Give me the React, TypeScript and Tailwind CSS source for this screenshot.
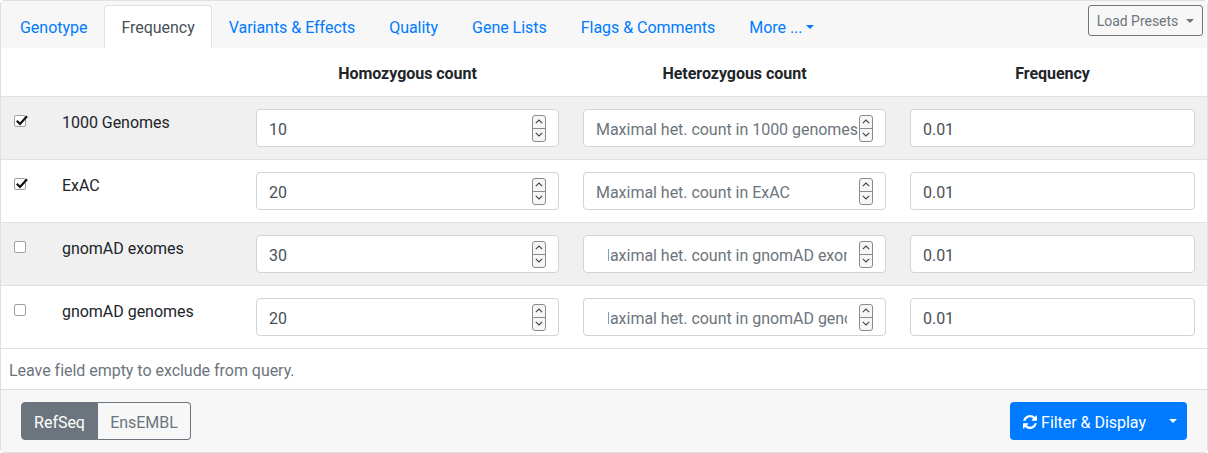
const TABS = ["Genotype", "Frequency", "Variants & Effects", "Quality", "Gene Lists", "Flags & Comments"];

type Row = {
    name: string;
    checked: boolean;
    hom: string;
    placeholder: string;
    clipped?: boolean;
};

const ROWS: Row[] = [
    { name: "1000 Genomes", checked: true, hom: "10", placeholder: "Maximal het. count in 1000 genomes" },
    { name: "ExAC", checked: true, hom: "20", placeholder: "Maximal het. count in ExAC" },
    { name: "gnomAD exomes", checked: false, hom: "30", placeholder: "Maximal het. count in gnomAD exomes", clipped: true },
    { name: "gnomAD genomes", checked: false, hom: "20", placeholder: "Maximal het. count in gnomAD genomes", clipped: true },
];

function Caret() {
    return <span className="inline-block border-x-[4.5px] border-t-[4.5px] border-x-transparent border-t-current" />;
}

function RefreshIcon() {
    return (
        <svg viewBox="0 0 1536 1536" className="mt-[2px] h-[14px] w-[14px] shrink-0" fill="currentColor">
            <path d="M1511 928q0 5-1 7-64 268-268 434.5t-478 166.5q-146 0-282.5-55t-243.5-157l-129 129q-19 19-45 19t-45-19-19-45v-448q0-26 19-45t45-19h448q26 0 45 19t19 45-19 45l-137 137q71 66 161 102t187 36q134 0 250-65t186-179q11-17 53-117 8-23 30-23h192q13 0 22.5 9.500t9.500 22.500zm25-800v448q0 26-19 45t-45 19h-448q-26 0-45-19t-19-45 19-45l138-138q-148-137-349-137-134 0-250 65t-186 179q-11 17-53 117-8 23-30 23h-199q-13 0-22.500-9.500t-9.500-22.500v-7q65-268 270-434.500t480-166.500q146 0 284 55.500t245 156.500l130-129q19-19 45-19t45 19 19 45z" />
        </svg>
    );
}

function CheckMark({ checked }: { checked: boolean }) {
    return (
        <span className="relative mt-[6px] block h-[12px] w-[12px] rounded-[2px] border border-[#a0a0a0] bg-white">
            {checked && (
                <svg viewBox="0 0 14 13" className="absolute -top-[2px] left-0 h-[13px] w-[14px]">
                    <path d="M1.8 6.8 L5 10 L12 2.2" fill="none" stroke="#111" strokeWidth="2.2" />
                </svg>
            )}
        </span>
    );
}

function Spinner() {
    return (
        <span className="mt-[1px] flex w-[14px] shrink-0 flex-col">
            <span className="flex h-[14px] items-center justify-center rounded-t-[3px] border border-[#8a8a8a] bg-[#f6f6f6]">
                <svg viewBox="0 0 8 5" className="h-[5px] w-[8px]">
                    <path d="M0.8 4.2 L4 1 L7.200 4.2" fill="none" stroke="#444" strokeWidth="1.1" />
                </svg>
            </span>
            <span className="-mt-px flex h-[14px] items-center justify-center rounded-b-[3px] border border-[#8a8a8a] bg-[#f6f6f6]">
                <svg viewBox="0 0 8 5" className="h-[5px] w-[8px]">
                    <path d="M0.8 0.8 L4 4 L7.200 0.8" fill="none" stroke="#444" strokeWidth="1.1" />
                </svg>
            </span>
        </span>
    );
}

function NumberField({ value, placeholder, clipped }: { value?: string; placeholder?: string; clipped?: boolean }) {
    return (
        <div className="flex h-[38px] items-center rounded-[4px] border border-[#ced4da] bg-white pl-3 pr-[12px]">
            {value ? (
                <span className="flex-1 pt-[4px] text-[#495057]">{value}</span>
            ) : clipped ? (
                <span className="ml-[12px] mr-[12px] flex-1 overflow-hidden whitespace-nowrap pt-[4px] text-[#6c757d]">
                    <span className="-ml-[12px] inline-block">{placeholder}</span>
                </span>
            ) : (
                <span className="flex-1 overflow-hidden whitespace-nowrap pt-[4px] text-[#6c757d]">{placeholder}</span>
            )}
            <Spinner />
        </div>
    );
}

export default function App() {
    return (
        <div className="h-[453px] w-[1208px] overflow-hidden bg-white font-['Roboto',sans-serif] text-base tracking-[-0.03px] text-[#212529]">
            <div className="flex h-[453px] flex-col rounded-[4px] border border-[#dfdfdf]">
                <div className="flex h-[47px] shrink-0 items-start justify-between bg-[#f7f7f7] pl-[2px] pr-[4px] pt-[4px]">
                    <nav className="flex">
                        {TABS.map((tab) =>
                            tab === "Frequency" ? (
                                <a key={tab} className="h-[43px] rounded-t-[4px] border border-b-0 border-[#dee2e6] bg-white px-4 pb-[6px] pt-[10px] text-[#495057]">
                                    {tab}
                                </a>
                            ) : (
                                <a key={tab} className="h-[43px] border border-transparent px-4 pb-[6px] pt-[10px] text-[#007bff]">
                                    {tab}
                                </a>
                            ),
                        )}
                        <a className="flex h-[43px] items-start gap-[3px] border border-transparent px-4 pb-[6px] pt-[10px] text-[#007bff]">
                            More ...
                            <span className="mt-[9px] flex"><Caret /></span>
                        </a>
                    </nav>
                    <button
                        type="button"
                        className="flex h-[31px] w-[115px] items-center justify-center gap-[8px] rounded-[3px] border border-[#6c757d] text-sm text-[#6c757d]"
                    >
                        Load Presets
                        <Caret />
                    </button>
                </div>

                <table className="w-full table-fixed border-collapse">
                    <colgroup>
                        <col className="w-[49px]" />
                        <col className="w-[194px]" />
                        <col className="w-[327px]" />
                        <col className="w-[327px]" />
                        <col />
                    </colgroup>
                    <thead>
                        <tr className="h-[48px] border-b border-[#dee2e6]">
                            <th />
                            <th />
                            <th className="pt-[4px] text-center font-bold">Homozygous count</th>
                            <th className="pt-[4px] text-center font-bold">Heterozygous count</th>
                            <th className="pt-[4px] text-center font-bold">Frequency</th>
                        </tr>
                    </thead>
                    <tbody>
                        {ROWS.map((row, i) => (
                            <tr key={row.name} className={`border-b border-[#dee2e6] ${i % 2 === 0 ? "bg-[#f0f0f0]" : "bg-white"}`}>
                                <td className="h-[63px] py-3 pl-[13px] align-top">
                                    <CheckMark checked={row.checked} />
                                </td>
                                <td className="px-3 pb-3 pt-[14px] align-top">{row.name}</td>
                                <td className="px-3 py-3 align-top">
                                    <NumberField value={row.hom} />
                                </td>
                                <td className="px-3 py-3 align-top">
                                    <NumberField placeholder={row.placeholder} clipped={row.clipped} />
                                </td>
                                <td className="px-3 py-3 align-top">
                                    <div className="flex h-[38px] items-center rounded-[4px] border border-[#ced4da] bg-white px-3 pt-[4px] text-[#495057]">
                                        0.01
                                    </div>
                                </td>
                            </tr>
                        ))}
                    </tbody>
                </table>

                <p className="flex h-[40px] shrink-0 items-center pl-2 pt-[4px] text-[#6c757d]">Leave field empty to exclude from query.</p>

                <div className="flex flex-1 items-start justify-between border-t border-[#dfdfdf] bg-[#f7f7f7] pl-5 pr-5 pt-3">
                    <div className="flex h-[38px]">
                        <span className="flex w-[77px] items-center justify-center rounded-l-[4px] border border-[#6c757d] bg-[#6c757d] pt-[4px] text-white">RefSeq</span>
                        <span className="flex w-[93px] items-center justify-center rounded-r-[4px] border border-l-0 border-[#6c757d] pt-[4px] text-[#6c757d]">EnsEMBL</span>
                    </div>
                    <div className="flex h-[38px] text-white">
                        <button type="button" className="flex w-[147px] items-center justify-center gap-[4px] rounded-l-[4px] bg-[#007bff] pl-[2px]">
                            <RefreshIcon />
                            <span className="pt-[4px]">Filter & Display</span>
                        </button>
                        <button type="button" className="flex w-[30px] items-center justify-center rounded-r-[4px] bg-[#007bff] pl-[2px]">
                            <Caret />
                        </button>
                    </div>
                </div>
            </div>
        </div>
    );
}
